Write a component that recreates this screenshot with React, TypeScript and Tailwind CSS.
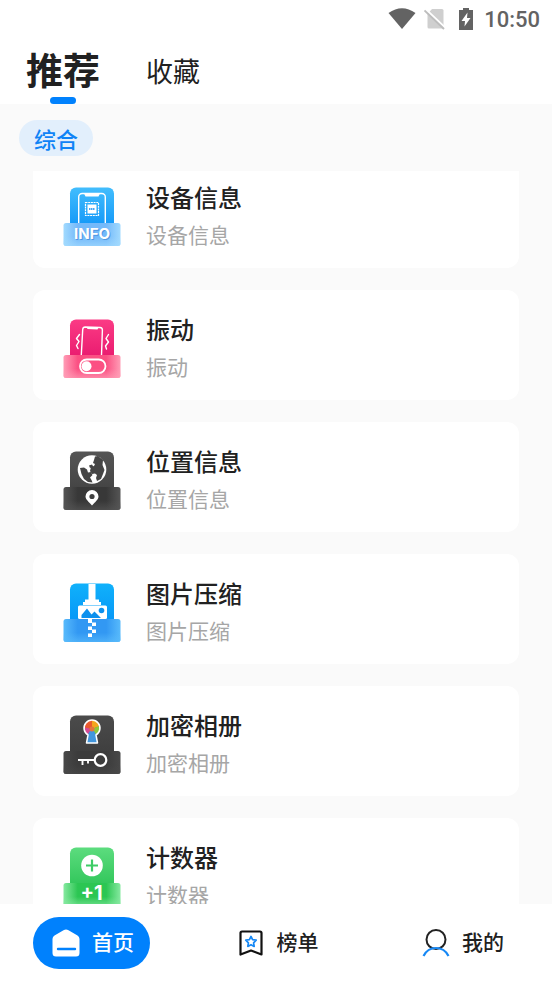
import { useState, type ReactNode } from "react";

function Tile({ id, top, base, children }: { id: string; top: [string, string]; base: [string, string]; children: ReactNode }) {
  return (
    <svg viewBox="0 0 58 60" className="h-15 w-[58px] shrink-0" aria-hidden="true">
      <defs>
        <linearGradient id={`${id}-top`} x1="0" y1="0" x2="0" y2="1">
          <stop offset="0" stopColor={top[0]} />
          <stop offset="1" stopColor={top[1]} />
        </linearGradient>
        <linearGradient id={`${id}-base`}>
          <stop offset="0" stopColor={base[1]} />
          <stop offset="0.25" stopColor={base[0]} />
          <stop offset="0.75" stopColor={base[0]} />
          <stop offset="1" stopColor={base[1]} />
        </linearGradient>
        <linearGradient id={`${id}-fade`} x1="0" y1="0" x2="0" y2="1">
          <stop offset="0.6" stopColor={base[1]} stopOpacity="0" />
          <stop offset="1" stopColor={base[1]} stopOpacity="0.7" />
        </linearGradient>
      </defs>
      <path d="M7 37V6.5a6 6 0 0 1 6-6h32a6 6 0 0 1 6 6V37z" fill={`url(#${id}-top)`} />
      <rect x="0.5" y="36" width="57" height="23" rx="2.5" fill={`url(#${id}-base)`} />
      <rect x="0.5" y="36" width="57" height="23" rx="2.5" fill={`url(#${id}-fade)`} />
      {children}
    </svg>
  );
}

function DeviceIcon() {
  return (
    <Tile id="device" top={["#42bdfd", "#169af8"]} base={["#74b9fa", "#a2dafe"]}>
      <path d="M15.7 36V10a3.500 3.500 0 0 1 3.500-3.500h19.600a3.500 3.500 0 0 1 3.500 3.500v26" fill="none" stroke="#fff" strokeWidth="1.400" />
      <path d="M21 6.500h16l-1.500 3h-13z" fill="#fff" />
      <rect x="22.500" y="15.500" width="13" height="13" fill="none" stroke="#fff" strokeWidth="1.200" strokeDasharray="2 0.700" />
      <rect x="24.500" y="17.500" width="9" height="9" fill="#fff" />
      <path d="M26 22h6" stroke="#4aa8f5" strokeWidth="2" strokeDasharray="1.500 0.500" />
      <text x="30" y="53" textAnchor="middle" className="font-[Inter] text-[15px] font-bold" fill="#3f88d6" opacity="0.7">INFO</text>
      <text x="29" y="52" textAnchor="middle" className="font-[Inter] text-[15px] font-bold" fill="#fff">INFO</text>
    </Tile>
  );
}

function VibrateIcon() {
  return (
    <Tile id="vibrate" top={["#fb3b85", "#ea1c70"]} base={["#fb5083", "#ff9db6"]}>
      <path d="M18.300 36l1.400-25.500q.2-2.500 2.500-2.500l14.800.500q2.500.200 2.400 2.500L38.500 36" fill="none" stroke="#fff" strokeWidth="1.400" />
      <path d="M23.500 8l12 .500-1 2-10-.500z" fill="#fff" />
      <path d="M16.500 15.500l-3 4 2.500 3-2.500 4 1.500 3M45.500 15.500l-2.500 4 2.500 3.500-3 4 1 3" fill="none" stroke="#fff" strokeWidth="1.400" strokeLinejoin="round" strokeLinecap="round" />
      <rect x="17" y="40.500" width="25.500" height="13.500" rx="6.750" fill="none" stroke="#fff" strokeWidth="1.800" />
      <circle cx="23.500" cy="47.300" r="5" fill="#fff" />
    </Tile>
  );
}

function LocationIcon() {
  return (
    <Tile id="location" top={["#555555", "#454545"]} base={["#383838", "#555555"]}>
      <circle cx="29" cy="18.500" r="14.300" fill="#fff" />
      <path d="M31 9l1-3.500 3-.500 5 4-.500 5 2 5-1.500 4-2 5-4 2-1-3 1-3-2-1.500-3 .500-2-3 1-4 3-1 1-2-2-1z" fill="#454545" />
      <path d="M17 17l4-.500 3 2 1 3 3-.500 1.500 3-2.500 2.500 1.500 2.500 1 2.500-4.500-.500-4-3-2.500-5z" fill="#454545" />
      <path d="M26 14.500l3-1 1.500 2.500-3.500 1z" fill="#454545" />
      <path d="M29 54.500c-3-3.500-6.500-6-6.500-9a6.500 6.500 0 0 1 13 0c0 3-3.500 5.500-6.500 9z" fill="#fff" />
      <circle cx="29" cy="45.500" r="2.600" fill="#404040" />
    </Tile>
  );
}

function CompressIcon() {
  return (
    <Tile id="compress" top={["#10b1fb", "#0798f7"]} base={["#3298f3", "#58bafb"]}>
      <path d="M25.500 1h7v15.500H36V19h2v3H20v-3h2v-2.500h3.500z" fill="#fff" />
      <rect x="15" y="22.500" width="29" height="13.500" rx="1.500" fill="#fff" />
      <path d="M18.500 35v-3l5.500-6.500 4.500 6 3-3L38 35z" fill="#0d91ee" />
      <circle cx="38.500" cy="27.500" r="2.800" fill="#0d91ee" />
      <path d="M25 36h4v3.500h4V43h-4v3.500h4V50h-4v4h-4v-3.500h4V47h-4v-3.500h4V40h-4z" fill="#fff" />
    </Tile>
  );
}

function AlbumIcon() {
  const keyhole = "M25 20a8 8 0 1 1 8 0l1.500 8h-11z";
  return (
    <Tile id="album" top={["#4b4b4b", "#3f3f3f"]} base={["#3c3c3c", "#484848"]}>
      <clipPath id="album-hole">
        <path d={keyhole} />
      </clipPath>
      <g clipPath="url(#album-hole)">
        <path d="M20 4h10v10H20z" fill="#e95a2e" />
        <path d="M29 4h9v7l-9 3z" fill="#f4a51e" />
        <path d="M29 14l9-4v9l-5 2z" fill="#8cc63e" />
        <path d="M20 12l9 2-2 8h-7z" fill="#d44a94" />
        <path d="M29 13l5 8v9H23v-8z" fill="#4296dc" />
        <circle cx="29" cy="14" r="2.500" fill="#e3773d" />
      </g>
      <path d={keyhole} fill="none" stroke="#fff" strokeWidth="1.500" strokeLinejoin="round" />
      <circle cx="37.500" cy="45" r="5.800" fill="none" stroke="#fff" strokeWidth="2.200" />
      <path d="M15 45h17M19.500 45v5M25 45v3.500" fill="none" stroke="#fff" strokeWidth="1.900" />
    </Tile>
  );
}

function CounterIcon() {
  return (
    <Tile id="counter" top={["#5cdc7e", "#33c75c"]} base={["#2cc653", "#86e9a0"]}>
      <circle cx="29" cy="18.500" r="10.800" fill="#fff" />
      <path d="M29 12.500v12M23 18.500h12" stroke="#3dcc66" strokeWidth="2.200" />
      <text x="28.500" y="53" textAnchor="middle" className="font-[Inter] text-[20px] font-bold" fill="#fff">+1</text>
    </Tile>
  );
}

const TOOLS = [
  { name: "设备信息", icon: <DeviceIcon /> },
  { name: "振动", icon: <VibrateIcon /> },
  { name: "位置信息", icon: <LocationIcon /> },
  { name: "图片压缩", icon: <CompressIcon /> },
  { name: "加密相册", icon: <AlbumIcon /> },
  { name: "计数器", icon: <CounterIcon /> },
];

function StatusBar() {
  return (
    <div className="flex h-[38px] shrink-0 items-center justify-end pr-3 text-[#636363]">
      <svg viewBox="0 0 28 22" className="h-[22px] w-7" aria-hidden="true">
        <path d="M0.500 5Q14-4.500 27.500 5L14 21z" fill="currentColor" />
      </svg>
      <svg viewBox="0 0 22 22" className="ml-2 h-[22px] w-[22px]" aria-hidden="true">
        <path d="M8 1h10q1.500 0 1.500 1.500v17q0 1-1 1H5q-1.500 0-1.500-1.500V6z" fill="#cfcfcf" />
        <path d="M1.500 1l20 19" stroke="#fff" strokeWidth="2" />
        <path d="M0.500 2.500l19.500 18.500" stroke="#bdbdbd" strokeWidth="1.800" />
      </svg>
      <svg viewBox="0 0 16 22" className="ml-3 h-[22px] w-4" aria-hidden="true">
        <path d="M5 0h6v2h4v20H1V2h4z" fill="currentColor" />
        <path d="M9.500 4.500l-6 8.500h3.500L6.500 18.500l6-8.500H9z" fill="#fff" />
      </svg>
      <span className="ml-2.5 font-[Roboto] text-[22px] font-medium">10:50</span>
    </div>
  );
}

const TABS = ["推荐", "收藏"];

function Tabs() {
  const [active, setActive] = useState("推荐");
  return (
    <nav className="flex h-[66px] shrink-0 gap-[42px] px-6">
      {TABS.map((t) => (
        <button
          key={t}
          type="button"
          onClick={() => setActive(t)}
          className={
            t === active
              ? "flex w-[78px] flex-col items-center pt-[3px] text-[37px] leading-[56px] font-bold"
              : "flex w-[58px] flex-col items-center text-[27px] leading-[66px]"
          }
        >
          {t}
          {t === active ? <span className="h-[7px] w-[26px] shrink-0 rounded-full bg-[#0081fd]" /> : null}
        </button>
      ))}
    </nav>
  );
}

function HomeIcon() {
  return (
    <svg viewBox="0 0 28 28" className="size-7" aria-hidden="true">
      <path d="M11.500 1.200q2.500-1.500 5 0l9 5.300q2 1.200 2 3.500V24q0 3.500-3.500 3.500H4Q.5 27.500.5 24V10q0-2.300 2-3.500z" fill="#fff" />
      <path d="M6 20h17" stroke="#0081fd" strokeWidth="2.400" strokeLinecap="round" />
    </svg>
  );
}

function RankIcon() {
  return (
    <svg viewBox="0 0 24 26" className="h-[26px] w-6" fill="none" aria-hidden="true">
      <path d="M1.500 3q0-1.500 1.500-1.500h18q1.500 0 1.500 1.500v21.500L12 20.500 1.500 24.500z" stroke="#111" strokeWidth="2.200" strokeLinejoin="round" />
      <path d="M12 6.500l1.600 3.200 3.600.500-2.600 2.600.600 3.600-3.200-1.700-3.200 1.700.600-3.600-2.600-2.600 3.600-.500z" stroke="#1688f5" strokeWidth="1.700" strokeLinejoin="round" />
    </svg>
  );
}

function MineIcon() {
  return (
    <svg viewBox="0 0 28 28" className="size-7" fill="none" aria-hidden="true">
      <circle cx="14" cy="10.500" r="9.500" stroke="#222" strokeWidth="2" />
      <path d="M1.500 27Q5.500 19 14 19T26.500 27" stroke="#1688f5" strokeWidth="2.200" />
    </svg>
  );
}

export default function App() {
  return (
    <div className="flex h-screen flex-col overflow-hidden bg-white font-['Noto_Sans_CJK_SC',sans-serif] text-[#212121]">
      <StatusBar />
      <Tabs />

      <main className="flex min-h-0 flex-1 flex-col bg-[#fafafa]">
        <div className="px-[19px] pt-4 pb-[15px]">
          <button type="button" className="block h-9 rounded-full bg-[#e2effc] px-[15px] text-[22px] leading-[34px] font-medium text-[#0f83f6]">
            综合
          </button>
        </div>
        <div className="min-h-0 flex-1 overflow-y-auto [scrollbar-width:none]">
          <ul className="-mt-[13px] flex flex-col gap-[22px] px-[33px]">
            {TOOLS.map((t) => (
              <li key={t.name}>
                <button type="button" className="flex h-[110px] w-full items-start gap-[25px] rounded-xl bg-white px-[30px] text-left">
                  <span className="pt-[29px]">{t.icon}</span>
                  <span className="pt-[19px]">
                    <span className="block text-[24px] leading-10 font-medium">{t.name}</span>
                    <span className="block text-[21px] leading-[34px] text-[#a6a6a6]">{t.name}</span>
                  </span>
                </button>
              </li>
            ))}
          </ul>
        </div>
      </main>

      <nav className="grid h-[77px] shrink-0 grid-cols-3 items-center pr-12 pl-[33px] text-[21px] font-medium">
        <a href="#home" aria-current="page" className="flex h-[52px] items-center gap-3 justify-self-start rounded-full bg-[#0081fd] pr-4 pl-[19px] text-white">
          <HomeIcon />
          <span className="pb-0.5">首页</span>
        </a>
        <a href="#rank" className="flex items-center gap-3.5 justify-self-center pl-5">
          <RankIcon />
          <span className="pb-0.5">榜单</span>
        </a>
        <a href="#mine" className="flex items-center gap-3 justify-self-end">
          <MineIcon />
          <span className="pb-0.5">我的</span>
        </a>
      </nav>
    </div>
  );
}
